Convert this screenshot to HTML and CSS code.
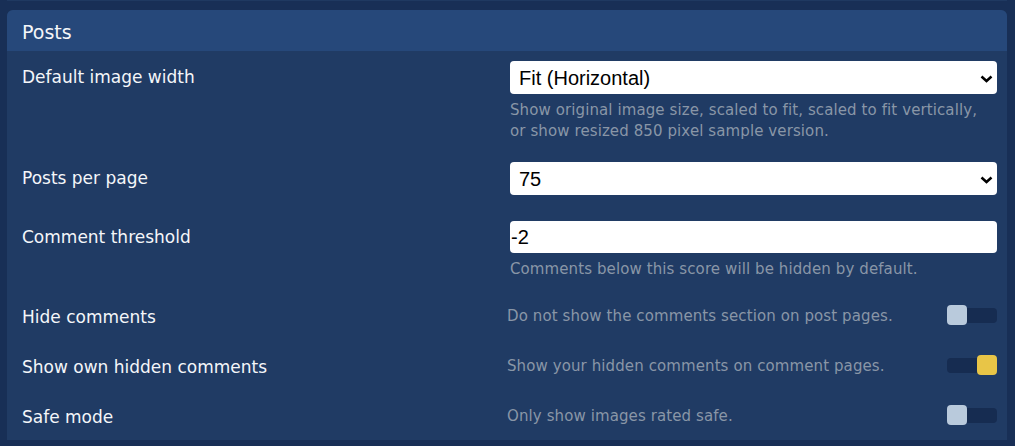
FILE: index.html
```html
<!DOCTYPE html>
<html>
  <head>
    <meta charset="utf-8">
    <title>Settings</title>
    <link rel="stylesheet" href="styles.css">
  </head>
<body>
    <div class="prev-edge"></div>
    <!-- Posts settings -->
    <section class="panel">
        <h2 class="panel-title">Posts</h2>

        <div class="row row-hint">
            <label class="row-label">Default image width</label>
            <div class="row-control">
                <div class="select-wrap">
                    <select class="field">
                        <option>Fit (Horizontal)</option>
                        <option>Original</option>
                        <option>Fit (Vertical)</option>
                        <option>Sample</option>
                    </select>
                    <svg class="chevron" width="13" height="8" viewBox="0 0 13 8"><path d="M1.5 1.5 L6.5 6 L11.5 1.5" fill="none" stroke="#000" stroke-width="2.5"/></svg>
                </div>
                <p class="hint">Show original image size, scaled to fit, scaled to fit vertically, or show resized 850 pixel sample version.</p>
            </div>
        </div>

        <div class="row row-plain">
            <label class="row-label">Posts per page</label>
            <div class="row-control">
                <div class="select-wrap">
                    <select class="field">
                        <option>75</option>
                        <option>100</option>
                        <option>150</option>
                    </select>
                    <svg class="chevron" width="13" height="8" viewBox="0 0 13 8"><path d="M1.5 1.5 L6.5 6 L11.5 1.5" fill="none" stroke="#000" stroke-width="2.5"/></svg>
                </div>
            </div>
        </div>

        <div class="row row-hint">
            <label class="row-label">Comment threshold</label>
            <div class="row-control">
                <input class="field field-text" type="text" value="-2">
                <p class="hint">Comments below this score will be hidden by default.</p>
            </div>
        </div>

        <div class="row row-toggle">
            <label class="row-label">Hide comments</label>
            <div class="toggle-line">
                <span class="hint">Do not show the comments section on post pages.</span>
                <span class="toggle"><span class="knob"></span></span>
            </div>
        </div>

        <div class="row row-toggle">
            <label class="row-label">Show own hidden comments</label>
            <div class="toggle-line">
                <span class="hint">Show your hidden comments on comment pages.</span>
                <span class="toggle on"><span class="knob"></span></span>
            </div>
        </div>

        <div class="row row-toggle">
            <label class="row-label">Safe mode</label>
            <div class="toggle-line">
                <span class="hint">Only show images rated safe.</span>
                <span class="toggle"><span class="knob"></span></span>
            </div>
        </div>
    </section>
</body>
</html>
```

FILE: styles.css
```css
html, body {
    margin: 0;
    background: #182f56;
}
body {
    padding: 0 8px 6px 7px;
    font-family: "DejaVu Sans", Verdana, sans-serif;
    color: #f4f6f9;
}
.prev-edge {
    height: 1px;
    background: #1f3961;
    margin-bottom: 9px;
}
.panel {
    background: #203b64;
    border-radius: 6px 6px 0 0;
}
.panel-title {
    margin: 0;
    height: 41px;
    box-sizing: border-box;
    padding: 4px 0 0 15px;
    line-height: 37px;
    background: #26487a;
    border-radius: 6px 6px 0 0;
    font-size: 19px;
    font-weight: normal;
}
.row {
    display: grid;
    grid-template-columns: 1fr 487px;
    align-items: start;
    padding: 10px 10px 10px 15px;
}
.row-label {
    font-size: 17px;
    line-height: 33px;
}
.row-plain {
    padding-bottom: 16px;
}
.select-wrap {
    position: relative;
}
.field {
    display: block;
    width: 100%;
    height: 33px;
    box-sizing: border-box;
    border: none;
    border-radius: 4px;
    background: #fff;
    color: #000;
    font-family: "Liberation Sans", Arial, sans-serif;
    font-size: 20px;
    padding: 0 9px;
    outline: none;
    appearance: none;
    -webkit-appearance: none;
}
.field-text {
    height: 32px;
    padding-left: 1px;
}
.chevron {
    position: absolute;
    right: 4px;
    top: 14px;
}
.hint {
    margin: 6px 0 0;
    font-size: 15px;
    letter-spacing: 0.1px;
    line-height: 21px;
    color: #8996a7;
}
.row-toggle {
    height: 50px;
    box-sizing: border-box;
    padding-top: 0;
    padding-bottom: 0;
    align-items: center;
}
.row-toggle .row-label {
    line-height: 20px;
    padding-top: 3px;
}
.toggle-line {
    display: flex;
    align-items: center;
    justify-content: space-between;
    margin-left: -3px;
}
.toggle-line .hint {
    margin: 0;
    padding-top: 2px;
}
.toggle {
    display: flex;
    align-items: center;
    width: 50px;
    height: 15px;
    border-radius: 4px;
    background: #162c51;
}
.knob {
    width: 20px;
    height: 20px;
    border-radius: 4px;
    background: #b9cadc;
}
.toggle.on {
    justify-content: flex-end;
}
.toggle.on .knob {
    background: #e8c547;
}
```
